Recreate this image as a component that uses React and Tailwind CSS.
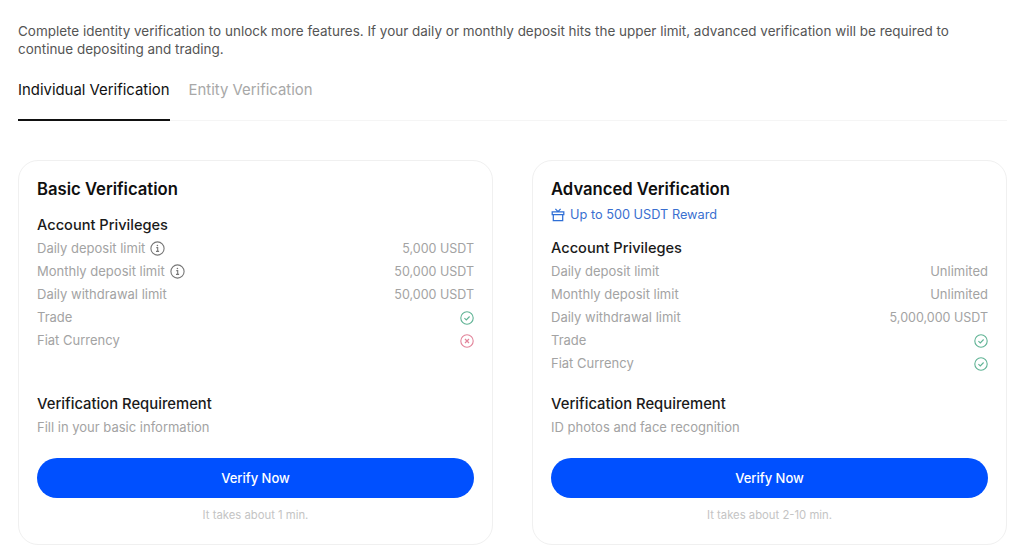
import React from "react";

function InfoIcon() {
  return (
    <svg width="15" height="15" viewBox="0 0 15 15" fill="none" className="shrink-0 text-[#777]">
      <circle cx="7.5" cy="7.5" r="6.6" stroke="currentColor" strokeWidth="1.1" />
      <path d="M6.3 6.6h1.4v3.6M6 10.4h3.1" stroke="currentColor" strokeWidth="1.1" />
      <circle cx="7.4" cy="4.5" r="0.8" fill="currentColor" />
    </svg>
  );
}

function CheckIcon() {
  return (
    <svg width="14" height="14" viewBox="0 0 14 14" fill="none" className="text-[#5fb394]">
      <circle cx="7" cy="7" r="6.2" stroke="currentColor" strokeWidth="1.1" />
      <path d="M4.4 7.2l1.9 1.8 3.3-3.5" stroke="currentColor" strokeWidth="1.1" />
    </svg>
  );
}

function CrossIcon() {
  return (
    <svg width="14" height="14" viewBox="0 0 14 14" fill="none" className="text-[#e2849a]">
      <circle cx="7" cy="7" r="6.2" stroke="currentColor" strokeWidth="1.1" />
      <path d="M5 5l4 4M9 5l-4 4" stroke="currentColor" strokeWidth="1.2" />
    </svg>
  );
}

function GiftIcon() {
  return (
    <svg width="14" height="14" viewBox="0 0 14 14" fill="none" className="text-[#2f6fd6]">
      <path d="M1.2 3.8h11.6v2.8H1.2zM2.3 6.6v6h9.4v-6M4.4 0.9L7 3.6l2.6-2.7" stroke="currentColor" strokeWidth="1.25" />
    </svg>
  );
}

function Row({ label, value, info }) {
  return (
    <div className="flex h-[23px] items-center justify-between text-[#a3a3a3]">
      <div className="flex items-center gap-[5px]">
        <span>{label}</span>
        {info && <InfoIcon />}
      </div>
      {typeof value === "string" ? (
        <span className={value.includes("USDT") ? "pt-[1px] text-[12.5px]" : ""}>{value}</span>
      ) : (
        value
      )}
    </div>
  );
}

function Card({ title, reward, rows, requirement, time }) {
  return (
    <div className="flex h-[385px] flex-col rounded-[20px] border border-[#f0f0f0] px-[18px] pt-[17px]">
      <h2 className="text-[16.65px] leading-[23px] font-semibold text-[#0f0f0f]">{title}</h2>
      {reward && (
        <div className="mt-[3px] flex h-[22px] items-center gap-[5px] text-[12.75px] text-[#3a6fd0]">
          <GiftIcon />
          <span>{reward}</span>
        </div>
      )}
      <h3 className={`${reward ? "mt-[11px]" : "mt-[13px]"} text-[14.6px] leading-[22px] font-medium text-[#1a1a1a]`}>
        Account Privileges
      </h3>
      <div className="mt-[1px]">
        {rows.map((row) => (
          <Row key={row.label} {...row} />
        ))}
      </div>
      <div className="flex-1" />
      <h3 className="text-[14.8px] leading-[22px] font-medium text-[#1a1a1a]">Verification Requirement</h3>
      <p className="mt-[1px] h-[23px] leading-[23px] text-[#a3a3a3]">{requirement}</p>
      <button className="mt-[19px] h-[40px] w-full rounded-full bg-[#0050ff] pt-[1px] text-[13px] font-medium text-white">
        Verify Now
      </button>
      <p className="mt-[9px] mb-[21px] text-center text-[11.3px] leading-[16px] text-[#c4c4c4]">{time}</p>
    </div>
  );
}

const basicRows = [
  { label: "Daily deposit limit", value: "5,000 USDT", info: true },
  { label: "Monthly deposit limit", value: "50,000 USDT", info: true },
  { label: "Daily withdrawal limit", value: "50,000 USDT" },
  { label: "Trade", value: <CheckIcon /> },
  { label: "Fiat Currency", value: <CrossIcon /> },
];

const advancedRows = [
  { label: "Daily deposit limit", value: "Unlimited" },
  { label: "Monthly deposit limit", value: "Unlimited" },
  { label: "Daily withdrawal limit", value: "5,000,000 USDT" },
  { label: "Trade", value: <CheckIcon /> },
  { label: "Fiat Currency", value: <CheckIcon /> },
];

export default function App() {
  return (
    <div className="h-[552px] w-[1024px] overflow-hidden bg-white pt-[22px] pr-[17px] pl-[18px] font-['Inter',sans-serif] text-[13px]">
      <p className="w-[960px] text-[13.48px] leading-[18px] text-[#555555]">
        Complete identity verification to unlock more features. If your daily or monthly deposit hits the upper limit,
        advanced verification will be required to continue depositing and trading.
      </p>
      <div className="mt-[16px] flex h-[47px] gap-[19px] border-b border-[#f5f5f5] text-[14.9px]">
        <div className="h-[47px] border-b-2 border-[#111] pt-[5px] leading-[22px] text-[#111]">Individual Verification</div>
        <div className="pt-[5px] leading-[22px] text-[#a8a8a8]">Entity Verification</div>
      </div>
      <div className="mt-[39px] grid grid-cols-[475px_475px] gap-[39px]">
        <Card
          title="Basic Verification"
          rows={basicRows}
          requirement="Fill in your basic information"
          time="It takes about 1 min."
        />
        <Card
          title="Advanced Verification"
          reward="Up to 500 USDT Reward"
          rows={advancedRows}
          requirement="ID photos and face recognition"
          time="It takes about 2-10 min."
        />
      </div>
    </div>
  );
}
